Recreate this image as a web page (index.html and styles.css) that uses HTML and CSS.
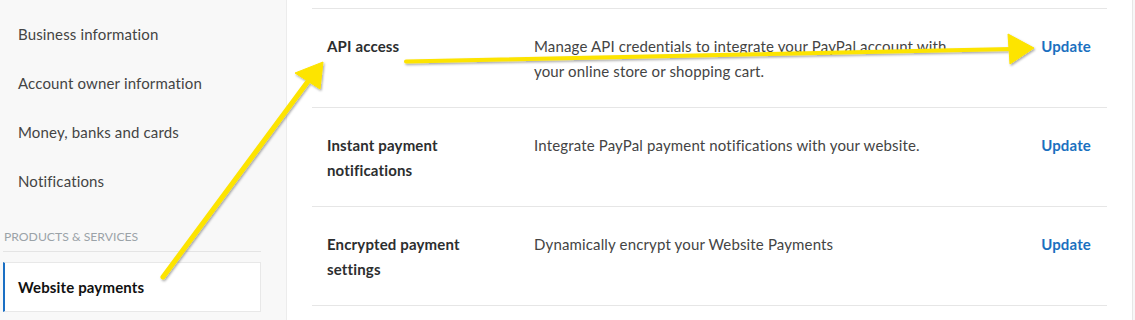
FILE: index.html
```html
<!DOCTYPE html>
<html lang="en">
<head>
    <meta charset="UTF-8">
    <title>Website payments</title>
    <link rel="stylesheet" href="styles.css">
</head>
<body>
    <div class="layout">
        <aside class="sidebar">
            <nav class="nav">
                <a href="#" class="nav-item">Business information</a>
                <a href="#" class="nav-item">Account owner information</a>
                <a href="#" class="nav-item">Money, banks and cards</a>
                <a href="#" class="nav-item">Notifications</a>
            </nav>
            <div class="nav-label">PRODUCTS &amp; SERVICES</div>
            <a href="#" class="nav-item active">Website payments</a>
        </aside>
        <main class="content">
            <div class="row">
                <div class="row-title">API access</div>
                <div class="row-desc">Manage API credentials to integrate your PayPal account with your online store or shopping cart.</div>
                <a href="#" class="row-link">Update</a>
            </div>
            <div class="row">
                <div class="row-title">Instant payment notifications</div>
                <div class="row-desc">Integrate PayPal payment notifications with your website.</div>
                <a href="#" class="row-link">Update</a>
            </div>
            <div class="row">
                <div class="row-title">Encrypted payment settings</div>
                <div class="row-desc">Dynamically encrypt your Website Payments</div>
                <a href="#" class="row-link">Update</a>
            </div>
        </main>
    </div>

    <!-- annotation arrows drawn over the screenshot -->
    <svg class="annotations" width="1135" height="320" viewBox="0 0 1135 320">
        <defs>
            <filter id="shadow" x="-10%" y="-10%" width="120%" height="120%">
                <feDropShadow dx="1" dy="1.5" stdDeviation="0.8" flood-color="#000" flood-opacity="0.35"/>
            </filter>
        </defs>
        <g filter="url(#shadow)" fill="#fde400" stroke="#fde400">
            <line x1="163" y1="277" x2="309" y2="80" stroke-width="5" stroke-linecap="round"/>
            <polygon points="323,62 295,73 320,89" stroke-width="1" stroke-linejoin="round"/>
            <line x1="406" y1="61.5" x2="1012" y2="49" stroke-width="4" stroke-linecap="round"/>
            <polygon points="1034,48 1008,34 1010,64" stroke-width="1" stroke-linejoin="round"/>
        </g>
    </svg>
</body>
</html>
```

FILE: styles.css
```css
body { margin: 0; background-color: #f7f7f7; font-family: Lato, "Liberation Sans", sans-serif; font-size: 15px; letter-spacing: 0.15px; color: #444; }
a { text-decoration: none; }
.layout { display: flex; width: 1133px; height: 320px; overflow: hidden; }
.sidebar { width: 283px; flex-shrink: 0; padding-left: 3px; background-color: #f8f8f8; border-right: 1px solid #ececec; }
.nav { display: flex; flex-direction: column; width: 258px; padding-top: 10px; }
.nav-item { display: block; line-height: 49px; padding-left: 15px; color: #444; }
.nav-label { width: 258px; margin-top: 20px; padding-left: 1px; line-height: 22px; padding-bottom: 3px; border-bottom: 1px solid #e4e4e4; font-size: 12.2px; letter-spacing: 0; color: #9ba3a8; box-sizing: border-box; }
.nav-item.active { width: 258px; box-sizing: border-box; margin-top: 10px; line-height: 48px; padding-left: 13px; background-color: white; border: 1px solid #e8e8e8; border-left: 2px solid #1a6fc4; color: #111; font-weight: bold; }
.content { flex: 1; background-color: white; border-right: 1px solid #e6e6e6; padding: 8px 25px 0; }
.row { display: grid; grid-template-columns: 207px 430px 1fr; align-items: start; padding: 25px 16px 23px 15px; line-height: 25px; border-bottom: 1px solid #e6e6e6; height: 50px; }
.row:first-child { border-top: 1px solid #e6e6e6; }
.row-title { color: #2c2e2f; font-weight: bold; padding-right: 40px; }
.row-desc { color: #444; }
.row-link { justify-self: end; color: #1a70c0; font-weight: bold; }
.annotations { position: absolute; top: 0; left: 0; pointer-events: none; }
```
